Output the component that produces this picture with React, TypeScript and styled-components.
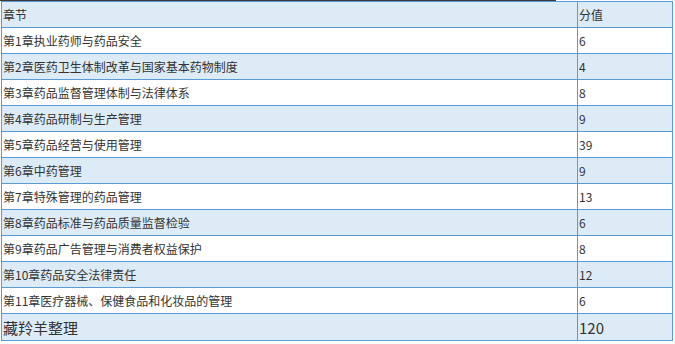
import React from "react";
import styled, { createGlobalStyle } from "styled-components";

const GlobalStyle = createGlobalStyle`
  body {
    margin: 0;
    background: #fff;
    font-family: "Noto Sans CJK SC", "DejaVu Sans", sans-serif;
  }
`;

const rows: [string, string][] = [
  ["第1章执业药师与药品安全", "6"],
  ["第2章医药卫生体制改革与国家基本药物制度", "4"],
  ["第3章药品监督管理体制与法律体系", "8"],
  ["第4章药品研制与生产管理", "9"],
  ["第5章药品经营与使用管理", "39"],
  ["第6章中药管理", "9"],
  ["第7章特殊管理的药品管理", "13"],
  ["第8章药品标准与药品质量监督检验", "6"],
  ["第9章药品广告管理与消费者权益保护", "8"],
  ["第10章药品安全法律责任", "12"],
  ["第11章医疗器械、保健食品和化妆品的管理", "6"],
];

const Page = styled.div`
  width: 675px;
  height: 344px;
  overflow: hidden;
`;

const TopEdge = styled.div`
  width: 556px;
  height: 1px;
  background: #3a3a3a;
`;

const Table = styled.table`
  margin-left: 1px;
  width: 671px;
  border-collapse: collapse;
  table-layout: fixed;
  color: #333;
`;

const Row = styled.tr<{ $shaded: boolean; $tall?: boolean }>`
  height: ${(p) => (p.$tall ? "27px" : "26px")};
  background: ${(p) => (p.$shaded ? "#ddebf7" : "#ffffff")};
`;

const Cell = styled.td<{ $big?: boolean }>`
  border: 1px solid #5b9bd5;
  padding: 0 0 0 1px;
  font-size: ${(p) => (p.$big ? "15px" : "12px")};
  line-height: 1;
  white-space: nowrap;
  vertical-align: middle;
`;

export default function App() {
  return (
    <Page>
      <GlobalStyle />
      <TopEdge />
      <Table>
        <colgroup>
          <col style={{ width: 576 }} />
          <col style={{ width: 95 }} />
        </colgroup>
        <tbody>
          <Row $shaded>
            <Cell>章节</Cell>
            <Cell>分值</Cell>
          </Row>
          {rows.map(([name, score], i) => (
            <Row key={name} $shaded={i % 2 === 1}>
              <Cell>{name}</Cell>
              <Cell>{score}</Cell>
            </Row>
          ))}
          <Row $shaded $tall>
            <Cell $big>藏羚羊整理</Cell>
            <Cell $big>120</Cell>
          </Row>
        </tbody>
      </Table>
    </Page>
  );
}
